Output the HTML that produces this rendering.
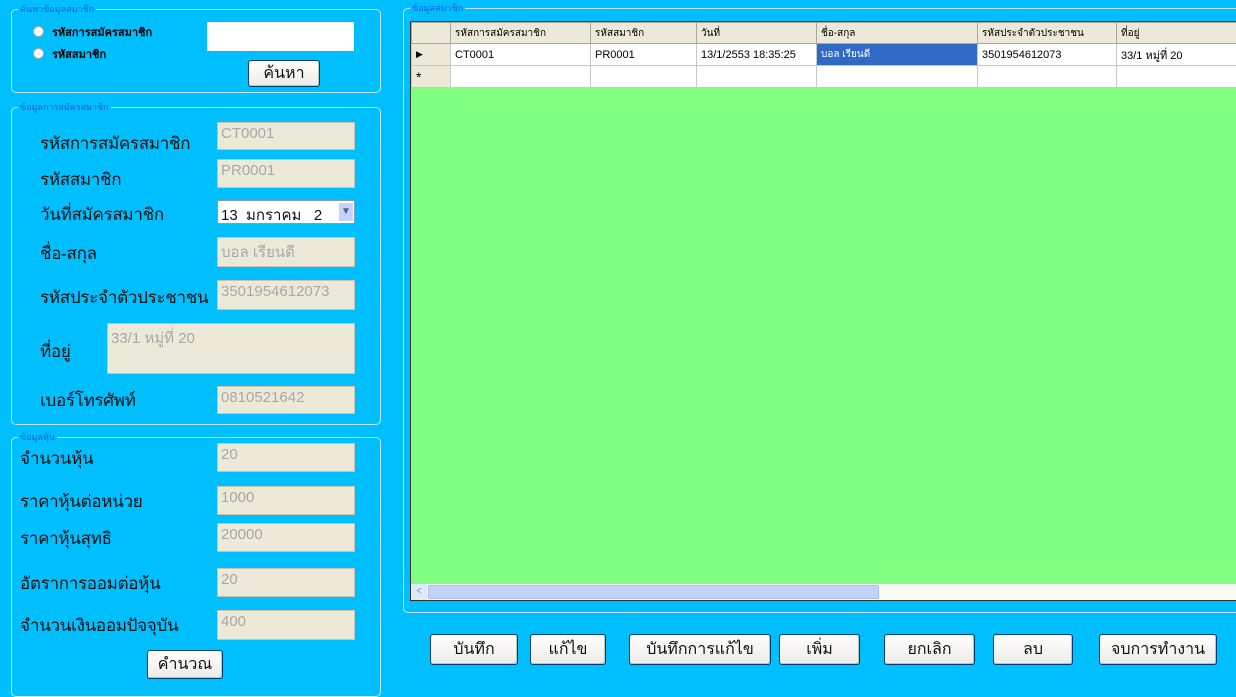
<!DOCTYPE html>
<html><head><meta charset="utf-8"><style>
*{margin:0;padding:0;box-sizing:border-box}
body{width:1236px;height:684px;background:#00BFFF;position:relative;overflow:hidden;font-family:"Liberation Serif","DejaVu Serif",serif}
.a{position:absolute}
.gb{position:absolute;border:1px solid #bfeaff;border-radius:5px}
.gt{position:absolute;top:-7px;left:6px;background:#00BFFF;color:#1060e0;font-size:9px;font-family:"Liberation Sans",sans-serif;padding:0 2px;line-height:12px}
.lab{position:absolute;font-size:17px;color:#111;white-space:nowrap;letter-spacing:-0.3px}
.in{position:absolute;background:#ece9d8;border:1px solid #c8c4b0;color:#a8a8a8;font-family:"Liberation Sans",sans-serif;font-size:15px;padding:2px 3px;left:217px;width:138px;white-space:nowrap;overflow:hidden}
.btn{position:absolute;background:linear-gradient(#fff,#ecebe6);border:1px solid #003c74;border-radius:3px;font-size:16px;color:#111;text-align:center;box-shadow:inset -1px -1px 0 #c5c2b2;white-space:nowrap}
table{border-collapse:collapse;font-family:"Liberation Sans",sans-serif;font-size:11px}
td{border:1px solid #c8c8c8;height:22px;padding:0 4px;white-space:nowrap;overflow:hidden}
.h td{background:#ece9d8;border-color:#aca899;height:21px;font-size:10px}
</style></head><body>
<div class="gb" style="left:11px;top:9px;width:370px;height:84px"><div class="gt">ค้นหาข้อมูลสมาชิก</div></div>
<div class="a" style="left:33px;top:26px;width:11px;height:11px;border-radius:50%;background:#fff;border:1px solid #aaa"></div>
<div class="a" style="left:52px;top:23px;font-size:11px;font-weight:bold;font-family:'Liberation Sans',sans-serif">รหัสการสมัครสมาชิก</div>
<div class="a" style="left:33px;top:48px;width:11px;height:11px;border-radius:50%;background:#fff;border:1px solid #aaa"></div>
<div class="a" style="left:52px;top:45px;font-size:11px;font-weight:bold;font-family:'Liberation Sans',sans-serif">รหัสสมาชิก</div>
<div class="a" style="left:207px;top:22px;width:147px;height:29px;background:#fff"></div>
<div class="btn" style="left:248px;top:60px;width:72px;height:27px;line-height:25px">ค้นหา</div>
<div class="gb" style="left:11px;top:107px;width:370px;height:318px"><div class="gt">ข้อมูลการสมัครสมาชิก</div></div>
<div class="lab" style="left:40px;top:130px">รหัสการสมัครสมาชิก</div>
<div class="in" style="top:122px;height:28px">CT0001</div>
<div class="lab" style="left:40px;top:166px">รหัสสมาชิก</div>
<div class="in" style="top:159px;height:29px">PR0001</div>
<div class="lab" style="left:40px;top:201px">วันที่สมัครสมาชิก</div>
<div class="in" style="top:200px;height:24px;background:#fff;color:#111;border-color:#7f9db9">13&nbsp; มกราคม &nbsp; 2<span style="position:absolute;right:1px;top:2px;width:14px;height:18px;background:#c3d3fd;color:#4d6185;font-size:10px;text-align:center;line-height:18px">▼</span></div>
<div class="lab" style="left:40px;top:240px">ชื่อ-สกุล</div>
<div class="in" style="top:237px;height:30px">บอล เรียนดี</div>
<div class="lab" style="left:40px;top:284px">รหัสประจำตัวประชาชน</div>
<div class="in" style="top:280px;height:30px">3501954612073</div>
<div class="lab" style="left:40px;top:338px">ที่อยู่</div>
<div class="in" style="top:323px;height:51px;left:107px;width:248px">33/1 หมู่ที่ 20</div>
<div class="lab" style="left:40px;top:387px">เบอร์โทรศัพท์</div>
<div class="in" style="top:386px;height:28px">0810521642</div>
<div class="gb" style="left:11px;top:437px;width:370px;height:260px"><div class="gt">ข้อมูลหุ้น</div></div>
<div class="lab" style="left:20px;top:445px">จำนวนหุ้น</div>
<div class="in" style="top:443px;height:29px">20</div>
<div class="lab" style="left:20px;top:488px">ราคาหุ้นต่อหน่วย</div>
<div class="in" style="top:486px;height:29px">1000</div>
<div class="lab" style="left:20px;top:525px">ราคาหุ้นสุทธิ</div>
<div class="in" style="top:523px;height:29px">20000</div>
<div class="lab" style="left:20px;top:570px">อัตราการออมต่อหุ้น</div>
<div class="in" style="top:568px;height:29px">20</div>
<div class="lab" style="left:20px;top:612px">จำนวนเงินออมปัจจุบัน</div>
<div class="in" style="top:610px;height:30px">400</div>
<div class="btn" style="left:147px;top:650px;width:76px;height:29px;line-height:27px">คำนวณ</div>
<div class="gb" style="left:403px;top:8px;width:840px;height:605px"><div class="gt">ข้อมูลสมาชิก</div></div>
<div class="a" style="left:410px;top:21px;width:830px;height:580px;background:#80FF80;border:1px solid #333"></div>
<table class="a" style="left:411px;top:22px;width:840px;table-layout:fixed">
<col style="width:39px"><col style="width:140px"><col style="width:106px"><col style="width:120px"><col style="width:161px"><col style="width:139px"><col style="width:135px">
<tr class="h"><td></td><td>รหัสการสมัครสมาชิก</td><td>รหัสสมาชิก</td><td>วันที่</td><td>ชื่อ-สกุล</td><td>รหัสประจำตัวประชาชน</td><td>ที่อยู่</td></tr>
<tr style="background:#fff"><td style="background:#ece9d8;font-size:9px">▶</td><td>CT0001</td><td>PR0001</td><td>13/1/2553 18:35:25</td><td style="background:#316ac5;color:#fff;font-size:10px">บอล เรียนดี</td><td>3501954612073</td><td>33/1 หมู่ที่ 20</td></tr>
<tr style="background:#fff"><td style="background:#ece9d8;font-size:14px">*</td><td></td><td></td><td></td><td></td><td></td><td></td></tr>
</table>
<div class="a" style="left:411px;top:584px;width:825px;height:16px;background:#fafaf5"></div>
<div class="a" style="left:411px;top:584px;width:16px;height:16px;background:#e0e8fc;font-size:10px;color:#4d6185;text-align:center;line-height:16px">&lt;</div>
<div class="a" style="left:428px;top:585px;width:451px;height:14px;background:#c1d2fb;border:1px solid #a9bff2;border-radius:2px"></div>
<div class="btn" style="left:430px;top:634px;width:88px;height:31px;line-height:29px">บันทึก</div>
<div class="btn" style="left:530px;top:634px;width:76px;height:31px;line-height:29px">แก้ไข</div>
<div class="btn" style="left:629px;top:634px;width:142px;height:31px;line-height:29px">บันทึกการแก้ไข</div>
<div class="btn" style="left:779px;top:634px;width:81px;height:31px;line-height:29px">เพิ่ม</div>
<div class="btn" style="left:884px;top:634px;width:91px;height:31px;line-height:29px">ยกเลิก</div>
<div class="btn" style="left:993px;top:634px;width:80px;height:31px;line-height:29px">ลบ</div>
<div class="btn" style="left:1099px;top:634px;width:118px;height:31px;line-height:29px">จบการทำงาน</div>
</body></html>
